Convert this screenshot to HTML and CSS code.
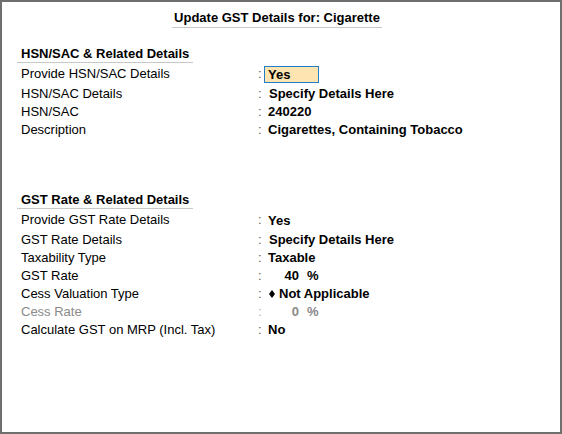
FILE: index.html
```html
<!DOCTYPE html>
<html lang="en">
<head>
    <meta charset="UTF-8">
    <meta name="viewport" content="width=device-width, initial-scale=1.0">
    <title>Update GST Details</title>
    <link rel="stylesheet" href="styles.css">
</head>
<body>
  <div class="window">
    <div class="title">
      <span class="title-text">Update GST Details for: Cigarette</span>
    </div>

    <div class="section first">
      <div class="heading"><span>HSN/SAC &amp; Related Details</span></div>
      <div class="grid">
        <div class="label tall">Provide HSN/SAC Details</div>
        <div class="colon tall">:</div>
        <div class="value tall"><span class="edit">Yes</span></div>

        <div class="label">HSN/SAC Details</div>
        <div class="colon">:</div>
        <div class="value shift">Specify Details Here</div>

        <div class="label">HSN/SAC</div>
        <div class="colon">:</div>
        <div class="value">240220</div>

        <div class="label">Description</div>
        <div class="colon">:</div>
        <div class="value">Cigarettes, Containing Tobacco</div>
      </div>
    </div>

    <div class="section second">
      <div class="heading"><span>GST Rate &amp; Related Details</span></div>
      <div class="grid">
        <div class="label tall">Provide GST Rate Details</div>
        <div class="colon tall">:</div>
        <div class="value tall">Yes</div>

        <div class="label">GST Rate Details</div>
        <div class="colon">:</div>
        <div class="value shift">Specify Details Here</div>

        <div class="label">Taxability Type</div>
        <div class="colon">:</div>
        <div class="value">Taxable</div>

        <div class="label">GST Rate</div>
        <div class="colon">:</div>
        <div class="value"><span class="num">40</span><span class="pct">%</span></div>

        <div class="label">Cess Valuation Type</div>
        <div class="colon">:</div>
        <div class="value">
          <svg class="diamond" width="6" height="8" viewBox="0 0 6 8"><polygon points="3,0 6,4 3,8 0,4" fill="#000"/></svg>
          Not Applicable
        </div>

        <div class="label off">Cess Rate</div>
        <div class="colon off">:</div>
        <div class="value off"><span class="num">0</span><span class="pct">%</span></div>

        <div class="label">Calculate GST on MRP (Incl. Tax)</div>
        <div class="colon">:</div>
        <div class="value">No</div>
      </div>
    </div>
  </div>
</body>
</html>
```

FILE: styles.css
```css
body{
    margin: 0;
    background-color: white;
    font-family: "Liberation Sans", Arial, sans-serif;
    font-size: 13px;
    color: #000;
}
.window{
    width: 562px;
    height: 434px;
    box-sizing: border-box;
    border: 2px solid #6f6f6f;
    background-color: white;
}
.title{
    display: flex;
    justify-content: center;
    padding-top: 8px;
    padding-right: 8px;
}
.title-text{
    font-weight: bold;
    line-height: 16px;
    padding: 0 2px 1px 2px;
    border-bottom: 1px solid #c8c8c8;
}
.section{
    padding-left: 15px;
}
.section.first{
    margin-top: 18px;
}
.section.second{
    margin-top: 53px;
}
.heading span{
    display: inline-block;
    font-weight: bold;
    line-height: 16px;
    padding: 0 4px 0 4px;
    border-bottom: 1px solid #c8c8c8;
}
.grid{
    display: grid;
    grid-template-columns: 236px 7px 1fr;
    grid-template-rows: 22px;
    grid-auto-rows: 18px;
    padding-left: 4px;
    line-height: 18px;
}
.grid .tall{
    line-height: 21px;
}
.colon{
    color: #6b5a3a;
    padding-left: 1px;
}
.value{
    font-weight: bold;
    padding-left: 4px;
    display: flex;
    align-items: center;
}
.value.shift{
    padding-left: 5px;
}
.edit{
    display: inline-block;
    box-sizing: border-box;
    width: 55px;
    height: 17px;
    line-height: 15px;
    margin-left: -4px;
    padding-left: 3px;
    background-color: #fde4b0;
    border: 1px solid #1e7fc8;
}
.num{
    display: inline-block;
    width: 31px;
    text-align: right;
}
.pct{
    margin-left: 8px;
}
.diamond{
    margin-left: 1px;
    margin-right: 4px;
}
.off{
    color: #8a8a8a;
}
.colon.off{
    color: #b0a890;
}
```
